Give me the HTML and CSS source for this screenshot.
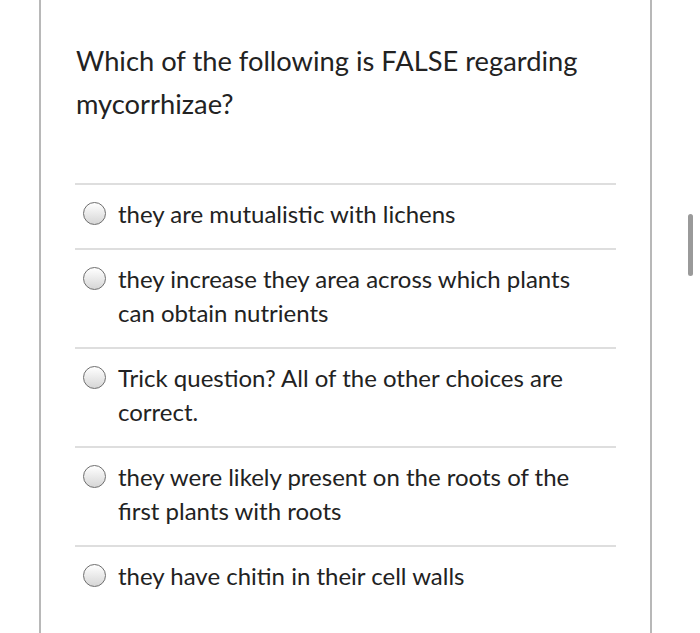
FILE: index.html
```html
<!DOCTYPE html>
<html>
<head>
<meta charset="utf-8">
<link rel="stylesheet" href="styles.css">
</head>
<body>
<div class="page">
  <div class="card">
    <div class="question">Which of the following is FALSE regarding mycorrhizae?</div>
    <div class="answers">
      <label class="answer"><span class="radio"></span><span class="text">they are mutualistic with lichens</span></label>
      <label class="answer"><span class="radio"></span><span class="text">they increase they area across which plants can obtain nutrients</span></label>
      <label class="answer"><span class="radio"></span><span class="text">Trick question? All of the other choices are correct.</span></label>
      <label class="answer"><span class="radio"></span><span class="text">they were likely present on the roots of the first plants with roots</span></label>
      <label class="answer"><span class="radio"></span><span class="text">they have chitin in their cell walls</span></label>
    </div>
  </div>
  <div class="scrollbar"></div>
</div>
</body>
</html>
```
FILE: styles.css
```css
html, body {
  margin: 0;
  padding: 0;
  background: #fff;
}
body {
  font-family: Lato, "Liberation Sans", sans-serif;
  color: #222;
  height: 633px;
  overflow: hidden;
}
.page {
  position: relative;
  height: 633px;
  padding-left: 39px;
}
.card {
  width: 541px;
  height: 700px;
  border-left: 2px solid #b8b8b8;
  border-right: 2px solid #b8b8b8;
  padding: 39px 34px 0 34px;
}
.question {
  font-size: 27.3px;
  line-height: 43px;
  padding-left: 1px;
  padding-right: 20px;
}
.answers {
  margin-top: 58px;
}
.answer {
  display: flex;
  align-items: flex-start;
  border-top: 2px solid #dedede;
  padding: 12px 0 17px 8px;
  font-size: 24px;
  line-height: 34px;
}
.radio {
  flex: none;
  width: 23px;
  height: 23px;
  border: 1px solid #6e6e6e;
  border-radius: 50%;
  background: linear-gradient(#ffffff, #d6d6d6);
  margin-top: 5px;
  margin-right: 12px;
  box-sizing: border-box;
}
.text {
  flex: 1;
  padding-right: 22px;
}
.scrollbar {
  position: absolute;
  left: 688px;
  top: 214px;
  width: 5px;
  height: 62px;
  border-radius: 3px;
  background: #9a9a9a;
}
```
